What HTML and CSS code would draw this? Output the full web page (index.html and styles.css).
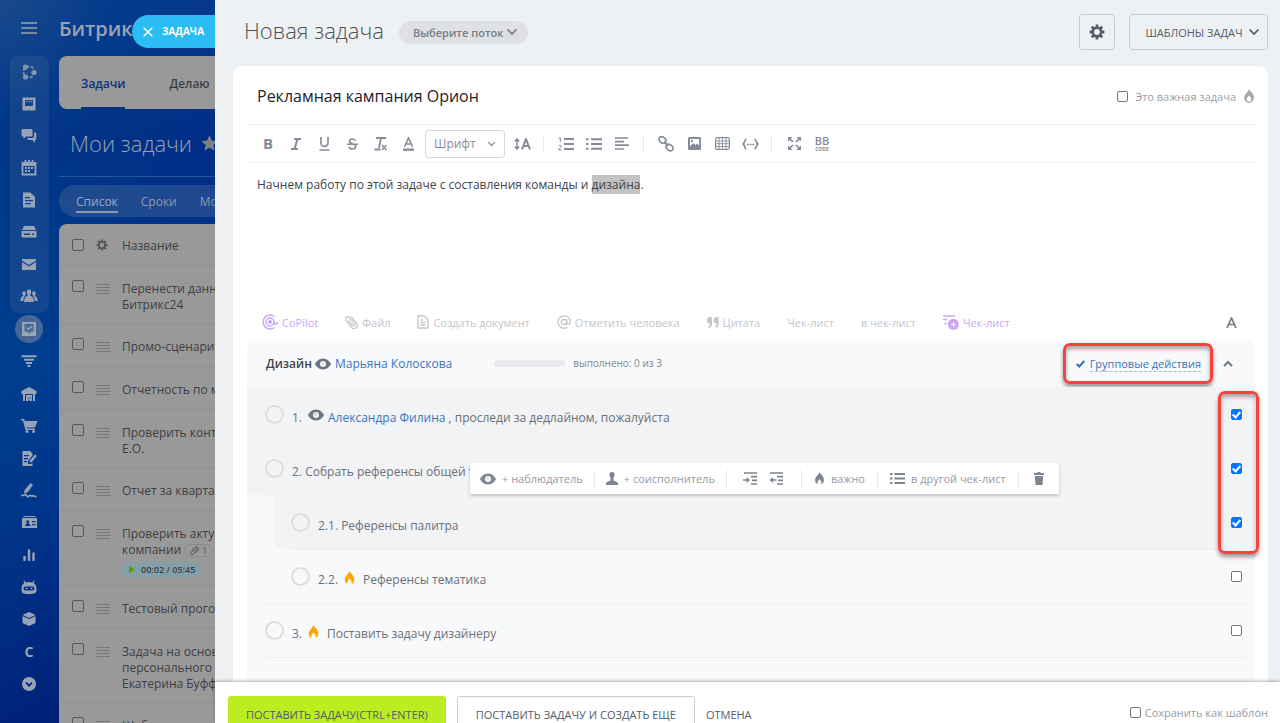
FILE: index.html
```html
<!DOCTYPE html>
<html lang="ru">
<head>
<meta charset="utf-8">
<title>Новая задача</title>
<link rel="stylesheet" href="styles.css">
</head>
<body>
<svg class="defs" aria-hidden="true">
  <symbol id="eye" viewBox="0 0 16 12"><path fill-rule="evenodd" d="M8 .5C4 .5 1.200 3.500 0 6c1.200 2.500 4 5.500 8 5.500s6.800-3 8-5.500C14.800 3.500 12 .5 8 .5zm0 2.500a3 3 0 1 1 0 6 3 3 0 0 1 0-6z" fill="currentColor"/><circle cx="7.500" cy="5.500" r="1.200" fill="currentColor" opacity=".3"/></symbol>
  <symbol id="flame" viewBox="0 0 12 14"><path d="M6 0c.3 2 4.800 4 4.800 8.600 0 2.200-1.200 4-3 4.900.9-1.500.8-3.500-1.800-6-2.600 2.500-2.700 4.500-1.800 6-1.800-.9-3-2.700-3-4.900C1.200 5.500 4.800 3.500 6 0z" fill="currentColor"/></symbol>
  <symbol id="chev" viewBox="0 0 12 8"><path d="M1.500 1.500 6 6l4.500-4.500" fill="none" stroke="currentColor" stroke-width="1.700"/></symbol>
  <symbol id="gear" viewBox="0 0 16 16"><circle cx="8" cy="8" r="4.200" fill="none" stroke="currentColor" stroke-width="2.600"/><path d="M8 .6v3M8 12.400v3M.6 8h3M12.400 8h3M2.800 2.800l2 2M11.200 11.200l2 2M13.200 2.800l-2 2M4.800 11.200l-2 2" stroke="currentColor" stroke-width="2.800"/></symbol>
  <symbol id="drag" viewBox="0 0 14 10"><path d="M0 .5h14M0 3.500h14M0 6.500h14M0 9.500h14" stroke="currentColor"/></symbol>
</svg>
<div class="shell">
  <div class="portal">
    <nav class="rail" aria-label="Главное меню">
      <button class="rail-item burger" aria-label="Меню"><svg width="16" height="14" viewBox="0 0 16 14"><path d="M0 2h16M0 7h16M0 12h16" stroke="currentColor" stroke-width="1.500"/></svg></button>
      <div class="rail-group">
        <a class="rail-item company" href="#" aria-label="Компания"><svg width="16" height="16" viewBox="0 0 16 16"><circle cx="8" cy="8" r="5.500" fill="none" stroke="currentColor" stroke-width="1.800" stroke-dasharray="3 1.500"/><circle cx="4.500" cy="3" r="2.600" fill="currentColor"/><circle cx="13" cy="8.500" r="2.600" fill="currentColor"/><circle cx="4.500" cy="13" r="2.600" fill="currentColor"/></svg></a>
        <a class="rail-item" href="#" aria-label="Лента"><svg width="16" height="16" viewBox="0 0 16 16"><path fill-rule="evenodd" d="M1.500 1.500h13v13h-13zM4 4v6h8V4z" fill="currentColor"/><path d="M5 5.500h1.500M7.500 5.500h1M9.500 5.500H11" stroke="currentColor"/></svg></a>
        <a class="rail-item" href="#" aria-label="Чат"><svg width="16" height="16" viewBox="0 0 16 16"><path d="M2 1h8a1.500 1.500 0 0 1 1.500 1.500V7A1.500 1.500 0 0 1 10 8.500H5L2.500 11V8.500H2A1.500 1.500 0 0 1 .5 7V2.500A1.500 1.500 0 0 1 2 1zM13 4.500h1a1.300 1.300 0 0 1 1.300 1.300v5A1.300 1.300 0 0 1 14 12.100V15l-2.500-2.900H8A1.500 1.500 0 0 1 6.500 10.600V10H11a2 2 0 0 0 2-2z" fill="currentColor"/></svg></a>
        <a class="rail-item" href="#" aria-label="Календарь"><svg width="16" height="16" viewBox="0 0 16 16"><path d="M1.500 3h13v11.500h-13zM1.500 5h13M4.500 0v4M8 0v4M11.500 0v4" fill="none" stroke="currentColor" stroke-width="1.800"/><path d="M4 8h2m1 0h2m1 0h2M4 11h2m1 0h2" stroke="currentColor" stroke-width="2"/></svg></a>
        <a class="rail-item" href="#" aria-label="Документы"><svg width="16" height="16" viewBox="0 0 16 16"><path fill-rule="evenodd" d="M2 .5h7.500L14 5v10.500H2zM4 5v1.300h5V5zM4 8v1.300h8V8zM4 11v1.300h6V11z" fill="currentColor"/></svg></a>
        <a class="rail-item" href="#" aria-label="Диск"><svg width="16" height="12" viewBox="0 0 16 12"><path fill-rule="evenodd" d="M3 0h10l2 4H1zM.5 5h15v6.500H.5zM3 7.500v1.500h6V7.500zM11 7.500v1.500h2V7.500z" fill="currentColor"/></svg></a>
        <a class="rail-item" href="#" aria-label="Почта"><svg width="14" height="11" viewBox="0 0 14 11"><path d="M0 0h14v1.500L7 6 0 1.500zM0 3l7 4.500L14 3v8H0z" fill="currentColor"/></svg></a>
        <a class="rail-item" href="#" aria-label="Группы"><svg width="18" height="14" viewBox="0 0 18 14"><path d="M9 .5c1.500 0 2.300 1 2.200 2.500 0 1.400-.5 2.300-1 2.800v1c2 .7 3.300 1.500 3.300 3.500L14 13H4l.5-2.700c0-2 1.300-2.800 3.300-3.500v-1c-.5-.5-1-1.400-1-2.800C6.700 1.500 7.500.5 9 .5zM4 2.200c1 0 1.800.7 1.800 2 0 1-.4 1.600-.8 2v.6L3.700 9l-.4 3H.5c0-3 .3-4 2.600-5V6.200c-.4-.4-.8-1-.8-2 0-1.300.7-2 1.700-2zM14 2.200c-1 0-1.800.7-1.800 2 0 1 .4 1.600.8 2v.6L14.300 9l.4 3h2.800c0-3-.3-4-2.600-5v-.8c.4-.4.8-1 .8-2 0-1.300-.7-2-1.700-2z" fill="currentColor"/></svg></a>
      </div>
      <div class="rail-list">
        <a class="rail-item active" href="#" aria-label="Задачи"><svg width="14" height="14" viewBox="0 0 14 14"><path fill-rule="evenodd" d="M0 0h14v14H0zM2.500 2v7.500H5L7 11.500l2-2h2.500V2z" fill="currentColor"/><path d="m4.500 5.500 2 2L10 4" fill="none" stroke="currentColor" stroke-width="1.500"/></svg></a>
        <a class="rail-item" href="#" aria-label="Воронка"><svg width="16" height="12" viewBox="0 0 16 12"><path d="M.5 1.200h15M3 4.800h10M5 8h6M6.500 11h3" stroke="currentColor" stroke-width="2"/></svg></a>
        <a class="rail-item" href="#" aria-label="Склад"><svg width="16" height="14" viewBox="0 0 16 14"><path fill-rule="evenodd" d="M8 0l7.500 4v3H14v7h-2V7H4v7H2V7H.5V4zM5 8h6v6H5zM6.500 10.500h1v1h-1zM8.500 10.500h1v1h-1zM7.500 12.500h1V14h-1z" fill="currentColor"/></svg></a>
        <a class="rail-item" href="#" aria-label="Магазин"><svg width="17" height="14" viewBox="0 0 17 14"><path d="M0 0h3l1 2h12.500L14 8.500H5.500l.3 1H14V11H4.500L2 1.500H0z" fill="currentColor"/><circle cx="6" cy="12.500" r="1.500" fill="currentColor"/><circle cx="12.500" cy="12.500" r="1.500" fill="currentColor"/></svg></a>
        <a class="rail-item" href="#" aria-label="Подпись"><svg width="16" height="15" viewBox="0 0 16 15"><path fill-rule="evenodd" d="M1.500 0H9l2.500 2.500v2L7 10v3h3l1.500-1.300V15h-10zM3 4v1.200h5V4zM3 7v1.200h4V7zM3 10v1.200h3V10z" fill="currentColor"/><path d="m8.500 11.500.5-2.300L14 3.500l1.700 1.500L11 11z" fill="currentColor"/></svg></a>
        <a class="rail-item" href="#" aria-label="Роспись"><svg width="16" height="15" viewBox="0 0 16 15"><path d="M9.500 0 12 2 6.500 9.500 3 10.500l.5-3.300zM.5 12.500h2" fill="currentColor"/><path d="M0 12.500c3 0 3.500-1.500 5-.5s1.500 2.500 3 1 1.500-.5 2.500 0 1.500-1 2.500 0 1.500.5 2.500.5" fill="none" stroke="currentColor" stroke-width="1.700"/></svg></a>
        <a class="rail-item" href="#" aria-label="Контакты"><svg width="15" height="13" viewBox="0 0 15 13"><path fill-rule="evenodd" d="M1.500 0h12v1h-12zM0 2h15v10H0zM3 10h5.500c0-1.500-1-2-1.800-2.300V7c.7-.8.700-2.800-1-2.800s-1.700 2-1 2.800v.7C4 8 3 8.500 3 10zM10 5v1.200h3.500V5zM10 8v1.200h3.500V8z" fill="currentColor"/></svg></a>
        <a class="rail-item" href="#" aria-label="Аналитика"><svg width="12" height="12" viewBox="0 0 12 12"><path d="M1.500 8v3M6 1.500V11M10.500 4.500V11" stroke="currentColor" stroke-width="2.400" stroke-linecap="round"/></svg></a>
        <a class="rail-item" href="#" aria-label="Роботы"><svg width="16" height="14" viewBox="0 0 16 14"><path fill-rule="evenodd" d="M3 0l1.500 2.500C6.500 1.800 9.500 1.800 11.500 2.500L13 0l.5.5-.7 2.800C14.500 4.500 15.500 6.500 15.500 9c0 4-1 5-7.500 5S.5 13 .5 9c0-2.500 1-4.500 2.700-5.700L2.500.5zM4.500 6.500a2 2 0 0 0 0 4h7a2 2 0 0 0 0-4z" fill="currentColor"/><circle cx="5.500" cy="8.500" r="1" fill="currentColor"/><circle cx="10.500" cy="8.500" r="1" fill="currentColor"/></svg></a>
        <a class="rail-item" href="#" aria-label="Маркет"><svg width="14" height="14" viewBox="0 0 14 14"><path d="m7 0 6.500 3L7 6 .5 3zM.5 4 7 7l6.500-3V11L7 14 .5 11z" fill="currentColor"/></svg></a>
        <a class="rail-item letter" href="#">C</a>
        <a class="rail-item" href="#" aria-label="Ещё"><svg width="14" height="14" viewBox="0 0 14 14"><circle cx="7" cy="7" r="7" fill="currentColor"/><path d="m4 5.700 3 3 3-3" fill="none" stroke="#00207f" stroke-width="1.700"/></svg></a>
      </div>
    </nav>
    <div class="portal-main">
      <div class="brand">Битрикс24</div>
      <div class="tabs"><a class="tab current" href="#">Задачи</a><a class="tab" href="#">Делаю</a></div>
      <div class="heading"><h2>Мои задачи</h2><svg width="17" height="16" viewBox="0 0 20 18"><path d="m10 0 2.800 6.200 6.800.7-5.100 4.500 1.500 6.600-6-3.500L4 18l1.500-6.600L.4 6.900l6.800-.7z" fill="currentColor"/></svg></div>
      <div class="views"><a class="view current" href="#">Список</a><a class="view" href="#">Сроки</a><a class="view" href="#">Мой план</a></div>
      <table class="tasks">
        <tr class="head"><th><input type="checkbox" aria-label="Выбрать все"></th><th><svg class="gear" width="12" height="12"><use href="#gear"/></svg></th><th>Название</th></tr>
        <tr><td><input type="checkbox" aria-label="Выбрать"></td><td><svg width="14" height="10"><use href="#drag"/></svg></td><td>Перенести данные<br>Битрикс24</td></tr>
        <tr><td><input type="checkbox" aria-label="Выбрать"></td><td><svg width="14" height="10"><use href="#drag"/></svg></td><td>Промо-сценарий</td></tr>
        <tr><td><input type="checkbox" aria-label="Выбрать"></td><td><svg width="14" height="10"><use href="#drag"/></svg></td><td>Отчетность по месяцу</td></tr>
        <tr><td><input type="checkbox" aria-label="Выбрать"></td><td><svg width="14" height="10"><use href="#drag"/></svg></td><td>Проверить контракт<br>Е.О.</td></tr>
        <tr><td><input type="checkbox" aria-label="Выбрать"></td><td><svg width="14" height="10"><use href="#drag"/></svg></td><td>Отчет за кварта...</td></tr>
        <tr class="timed"><td><input type="checkbox" aria-label="Выбрать"></td><td><svg width="14" height="10"><use href="#drag"/></svg></td><td>Проверить актуальность<br>компании <span class="clip"><svg width="9" height="9" viewBox="0 0 9 9"><path d="m2.500 6 3-3.200a1 1 0 0 1 1.500 1.400L3.500 8A1.700 1.700 0 0 1 1 5.700L5 1.500A2 2 0 0 1 8 4.200L5.500 7" fill="none" stroke="currentColor"/></svg>1</span><span class="timer"><svg width="6" height="7" viewBox="0 0 6 7"><path d="M0 0l6 3.500L0 7z" fill="#4f9a05"/></svg>00:02 / 05:45</span></td></tr>
        <tr><td><input type="checkbox" aria-label="Выбрать"></td><td><svg width="14" height="10"><use href="#drag"/></svg></td><td>Тестовый прогон</td></tr>
        <tr><td><input type="checkbox" aria-label="Выбрать"></td><td><svg width="14" height="10"><use href="#drag"/></svg></td><td>Задача на основе<br>персонального<br>Екатерина Буффало</td></tr>
        <tr><td><input type="checkbox" aria-label="Выбрать"></td><td><svg width="14" height="10"><use href="#drag"/></svg></td><td>Шаблон задачи</td></tr>
      </table>
    </div>
    <button class="slider-tab"><svg width="10" height="10" viewBox="0 0 10 10"><path d="m.7.700 8.600 8.600M9.300.700.700 9.300" stroke="currentColor" stroke-width="1.500"/></svg>ЗАДАЧА</button>
  </div>

  <main class="slider">
    <header class="top">
      <h1>Новая задача</h1>
      <button class="flow">Выберите поток<svg width="12" height="8"><use href="#chev"/></svg></button>
      <button class="ghost square" aria-label="Настройки"><svg width="16" height="16"><use href="#gear"/></svg></button>
      <button class="ghost templates">ШАБЛОНЫ ЗАДАЧ<svg width="12" height="8"><use href="#chev"/></svg></button>
    </header>

    <section class="card">
      <div class="title-row">
        <input class="title" type="text" value="Рекламная кампания Орион" aria-label="Название задачи">
        <label class="important"><input type="checkbox"><span>Это важная задача</span><svg width="12" height="14" viewBox="0 0 12 14"><path d="M6 0c.3 2 5 4 5 8.600A5 5 0 0 1 6 13.700a5 5 0 0 1-5-5.100C1 5.500 4.800 3.500 6 0z" fill="#a5abb3"/><path d="M6 6.200c.3 1 2.300 2 2.300 4A2.200 2.200 0 0 1 6 12.400a2.200 2.200 0 0 1-2.300-2.200c0-2 2-3 2.300-4z" fill="#fff"/></svg></label>
      </div>

      <div class="format">
        <button aria-label="Полужирный"><b>B</b></button>
        <button aria-label="Курсив"><svg width="10" height="12" viewBox="0 0 10 12"><path d="M3 1h7M0 11h7M6.500 1l-3 10" stroke="currentColor" stroke-width="2"/></svg></button>
        <button aria-label="Подчёркнутый"><svg width="11" height="14" viewBox="0 0 11 14"><path d="M2 0v6a3.500 3.500 0 0 0 7 0V0M.500 13h10" fill="none" stroke="currentColor" stroke-width="1.700"/></svg></button>
        <button aria-label="Зачёркнутый"><svg width="11" height="12" viewBox="0 0 11 12"><path d="M8.500 3C8 1.500 7 1 5.500 1 3.500 1 2.500 2 2.500 3.300c0 3 6.200 2 6.200 5 0 1.700-1.300 2.700-3.200 2.700S2.500 10.200 2 8.700M0 6.300h11" fill="none" stroke="currentColor" stroke-width="1.600"/></svg></button>
        <button aria-label="Очистить формат"><svg width="13" height="14" viewBox="0 0 13 14"><path d="M2 1h10M7 1 5 11M.500 12.500h6" stroke="currentColor" stroke-width="1.800"/><path d="m8 8 4.500 5M12.500 8 8 13" stroke="currentColor" stroke-width="1.400"/></svg></button>
        <button aria-label="Цвет текста"><svg width="11" height="14" viewBox="0 0 11 14"><path d="M1.500 10 5.500.8l4 9.200M3 7h5" fill="none" stroke="currentColor" stroke-width="1.500"/><path d="M0 12.700h11" stroke="currentColor" stroke-width="2.200"/></svg></button>
        <label class="font-box"><select aria-label="Шрифт"><option>Шрифт</option></select><svg width="9" height="6"><use href="#chev"/></svg></label>
        <button aria-label="Размер шрифта"><svg width="17" height="12" viewBox="0 0 17 12"><path d="M3 1.500v9M.700 3.500 3 1l2.300 2.500M.700 8.500 3 11l2.300-2.500" fill="none" stroke="currentColor" stroke-width="1.500"/><path d="m8 11.500 4-10.500 4 10.500M9.500 8h5" fill="none" stroke="currentColor" stroke-width="2"/></svg></button>
        <i class="sep"></i>
        <button aria-label="Нумерованный список"><svg width="16" height="14" viewBox="0 0 16 14"><path d="M6 2h10M6 7h10M6 12h10" stroke="currentColor" stroke-width="1.800"/><path d="M.800 1.500 2.300.700V5M.500 9c.5-1 2.700-1 2.700.3C3.200 10.500.700 11.500.600 13h3" fill="none" stroke="currentColor"/></svg></button>
        <button aria-label="Маркированный список"><svg width="16" height="12" viewBox="0 0 16 12"><path d="M0 1.200h2.500M0 6h2.500M0 10.800h2.500M5 1.200h11M5 6h11M5 10.800h11" stroke="currentColor" stroke-width="2"/></svg></button>
        <button aria-label="Выравнивание"><svg width="14" height="13" viewBox="0 0 14 13"><path d="M0 1h13M0 4.600h9M0 8.200h14M0 12h9" stroke="currentColor" stroke-width="1.700"/></svg></button>
        <i class="sep"></i>
        <button aria-label="Ссылка"><svg width="16" height="16" viewBox="0 0 16 16"><g fill="none" stroke="currentColor" stroke-width="1.600"><ellipse cx="4.500" cy="4" rx="3.800" ry="2.800" transform="rotate(40 4.500 4)"/><ellipse cx="11.500" cy="11.500" rx="3.800" ry="2.800" transform="rotate(40 11.500 11.500)"/><path d="m6 5.500 4 4.500"/></g></svg></button>
        <button aria-label="Изображение"><svg width="13" height="13" viewBox="0 0 13 13"><path fill-rule="evenodd" d="M1.500 0h10A1.500 1.500 0 0 1 13 1.500v10a1.500 1.500 0 0 1-1.500 1.500h-10A1.500 1.500 0 0 1 0 11.500v-10A1.500 1.500 0 0 1 1.500 0zM2 9.500l3-3.500 2.500 2L9 6.500l2.200 2V2H2zM3 3h2v2H3z" fill="currentColor"/></svg></button>
        <button aria-label="Таблица"><svg width="15" height="13" viewBox="0 0 15 13"><rect x=".600" y=".600" width="13.800" height="11.800" rx="1.500" fill="none" stroke="currentColor" stroke-width="1.200"/><path d="M4 0v13M7.500 0v13M11 0v13M0 4h15M0 6.700h15M0 9.500h15" stroke="currentColor" stroke-width=".9"/></svg></button>
        <button aria-label="Код"><svg width="17" height="12" viewBox="0 0 17 12"><path d="M4.500 1C2 1.500 3.500 4.500 1 6c2.500 1.500 1 4.500 3.500 5M12.500 1C15 1.500 13.500 4.500 16 6c-2.500 1.500-1 4.500-3.500 5" fill="none" stroke="currentColor" stroke-width="1.600"/><path d="M5 6.500h1.800M7.700 6.500h1.800M10.400 6.500h1.800" stroke="currentColor" stroke-width="1.600"/></svg></button>
        <i class="sep"></i>
        <button aria-label="Развернуть"><svg width="13" height="13" viewBox="0 0 13 13"><path d="M0 0h4.500L0 4.500zM13 0v4.500L8.500 0zM0 13V8.500L4.500 13zM13 13H8.500L13 8.500z" fill="currentColor"/><path d="m1 1 4 4M12 1 8 5M1 12l4-4M12 12 8 8" stroke="currentColor" stroke-width="1.700"/></svg></button>
        <button class="bb" aria-label="BB код"><b>BB</b><span>CODE</span></button>
      </div>

      <div class="editor">Начнем работу по этой задаче с составления команды и <mark>дизайна</mark>.</div>

      <div class="inserts">
        <button class="violet"><svg width="16" height="16" viewBox="0 0 16 16"><circle cx="8" cy="8" r="4" fill="none" stroke="currentColor" stroke-width="1.500"/><circle cx="8" cy="8" r="2" fill="currentColor"/><path d="M12.500 2.500a7 7 0 1 0 0 11M15 8a7 7 0 0 1-.5 2.500" fill="none" stroke="currentColor" stroke-width="1.500"/><path d="M12 8c0 3 2.500 3 3 0" fill="none" stroke="currentColor" stroke-width="1.300"/></svg>CoPilot</button>
        <button><svg width="13" height="15" viewBox="0 0 13 15"><path d="m3.500 5.500 4 5a1.300 1.300 0 0 0 2-1.600l-5-6.300A2.200 2.200 0 0 0 1 5.500L6.500 12.500a3.300 3.300 0 0 0 5.200-4L6 1.500" fill="none" stroke="currentColor" stroke-width="1.300"/></svg>Файл</button>
        <button><svg width="12" height="14" viewBox="0 0 12 14"><path d="M1 1h6.500L11 4.500V13H1zM3.500 5H6M3.500 7.500h5M3.500 10h5" fill="none" stroke="currentColor" stroke-width="1.300"/></svg>Создать документ</button>
        <button><svg width="14" height="14" viewBox="0 0 14 14"><circle cx="7" cy="7" r="2.700" fill="none" stroke="currentColor" stroke-width="1.300"/><path d="M9.700 4.200v3.500c0 2.700 3.500 2 3.500-1C13 3 10.500.8 7 .8a6.200 6.200 0 1 0 3.500 11.400" fill="none" stroke="currentColor" stroke-width="1.300"/></svg>Отметить человека</button>
        <button><svg width="12" height="11" viewBox="0 0 12 11"><path d="M2.500 0H5v6c0 3-1.200 4.500-3.500 5V9.500C2.500 9 3 8 3 6.500 1 6.500 0 5.500 0 3.200S1 0 2.500 0zM9.200 0h2.500v6c0 3-1.200 4.500-3.500 5V9.500c1-.5 1.500-1.500 1.500-3-2 0-3-1-3-3.300S7.700 0 9.200 0z" fill="currentColor"/></svg>Цитата</button>
        <button>Чек-лист</button>
        <button>в чек-лист</button>
        <button class="violet"><svg width="16" height="15" viewBox="0 0 16 15"><path d="M0 1h12M0 4.500h4M1.500 8.500H4" stroke="currentColor" stroke-width="1.700"/><circle cx="10.300" cy="9.300" r="5.500" fill="currentColor"/><path d="M10.500 6.500l.8 2.200 2.200.8-2.200.8-.8 2.200-.8-2.200-2.200-.8 2.200-.8z" fill="#fff"/></svg>Чек-лист</button>
        <button class="plain-a" aria-label="Форматирование"><svg width="11" height="11" viewBox="0 0 11 11"><path d="m1 11 4.500-10L10 11M2.500 7.500h6" fill="none" stroke="currentColor" stroke-width="1.700"/></svg></button>
      </div>

      <div class="checklist">
        <div class="cl-head">
          <strong>Дизайн</strong><svg class="eye" width="16" height="12"><use href="#eye"/></svg><a href="#">Марьяна Колоскова</a>
          <progress max="3" value="0" aria-label="выполнено"></progress><span class="done">выполнено: 0 из 3</span>
          <div class="group"><svg width="9" height="8" viewBox="0 0 9 8"><path d="m.800 4 2.500 2.500L8.300 1" fill="none" stroke="currentColor" stroke-width="2"/></svg><a href="#">Групповые действия</a><i class="frame frame-group"></i></div>
          <button class="fold" aria-label="Свернуть"><svg width="10" height="7" viewBox="0 0 10 7"><path d="m1 6 4-4 4 4" fill="none" stroke="currentColor" stroke-width="2.200"/></svg></button>
        </div>
        <div class="rows">
          <div class="row picked"><div class="line"><button class="ring" aria-label="Выполнить"></button><label for="c1">1.</label><svg class="eye" width="16" height="12"><use href="#eye"/></svg><span><a href="#">Александра Филина</a> , проследи за дедлайном, пожалуйста</span><input id="c1" type="checkbox" checked></div></div>
          <div class="row picked"><div class="line"><button class="ring" aria-label="Выполнить"></button><label for="c2">2. Собрать референсы общей темы</label><input id="c2" type="checkbox" checked></div>
            <div class="actions">
              <button><svg class="eye" width="16" height="12"><use href="#eye"/></svg>+ наблюдатель</button>
              <button><svg width="12" height="13" viewBox="0 0 12 13"><path d="M6 0c2 0 2.600 1.300 2.500 3-.1 1.500-.7 2.300-1.200 3l.5 3c2 .3 3.700 1 4.200 2v2H0v-2c.5-1 2.200-1.700 4.200-2l.5-3c-.5-.7-1.100-1.500-1.200-3C3.400 1.300 4 0 6 0z" fill="currentColor"/></svg>+ соисполнитель</button>
              <div class="indent"><button aria-label="Вправо"><svg width="14" height="13" viewBox="0 0 14 13"><path d="M1 1h13M8 4.700h6M9 8.300h5M8 12h6M0 8h5" stroke="currentColor" stroke-width="1.700"/><path d="m3.500 5 3.500 3-3.500 3z" fill="currentColor"/></svg></button><button aria-label="Влево"><svg width="14" height="13" viewBox="0 0 14 13"><path d="M1 1h13M8 4.700h6M9 8.300h5M8 12h6M3 8h4.500" stroke="currentColor" stroke-width="1.700"/><path d="M4 5 .500 8 4 11z" fill="currentColor"/></svg></button></div>
              <button><svg width="11" height="13"><use href="#flame"/></svg>важно</button>
              <button><svg width="15" height="11" viewBox="0 0 15 11"><path d="M0 1h2.500M0 5.500h2.500M0 10h2.500M4.500 1H15M4.500 5.500H15M4.500 10H15" stroke="currentColor" stroke-width="1.800"/></svg>в другой чек-лист</button>
              <button class="trash" aria-label="Удалить"><svg width="10" height="13" viewBox="0 0 10 13"><path d="M3.500 0h3v1H10v2H0V1h3.500zM.800 4h8.400l-.7 9h-7z" fill="currentColor"/></svg></button>
            </div>
          </div>
          <div class="row child picked"><div class="line"><button class="ring" aria-label="Выполнить"></button><label for="c3">2.1. Референсы палитра</label><input id="c3" type="checkbox" checked></div></div>
          <div class="row child last"><div class="line"><button class="ring" aria-label="Выполнить"></button><label for="c4">2.2.</label><svg class="fire" width="13" height="14"><use href="#flame"/></svg><span>Референсы тематика</span><input id="c4" type="checkbox"></div></div>
          <div class="row"><div class="line"><button class="ring" aria-label="Выполнить"></button><label for="c5">3.</label><svg class="fire" width="13" height="14"><use href="#flame"/></svg><span>Поставить задачу дизайнеру</span><input id="c5" type="checkbox"></div></div>
          <i class="frame frame-checks"></i>
        </div>
      </div>
    </section>

    <footer class="bottom">
      <button class="submit">ПОСТАВИТЬ ЗАДАЧУ(CTRL+ENTER)</button>
      <button class="again">ПОСТАВИТЬ ЗАДАЧУ И СОЗДАТЬ ЕЩЕ</button>
      <button class="cancel">ОТМЕНА</button>
      <label class="save"><input type="checkbox">Сохранить как шаблон</label>
    </footer>
  </main>
</div>
</body>
</html>
```
FILE: styles.css
```css
*, *::after { box-sizing: border-box; }
body { margin: 0; font: 13px/17px "Open Sans", "Noto Sans", sans-serif; color: #525c69; }
button { font: inherit; color: inherit; background: none; border: 0; padding: 0; display: inline-flex; align-items: center; justify-content: center; white-space: nowrap; cursor: pointer; }
a { color: inherit; text-decoration: none; }
svg { flex: none; display: block; }
h1, h2 { margin: 0; font-weight: 300; }
input[type="checkbox"] { appearance: none; flex: none; width: 11px; height: 11px; margin: 0; border: 1px solid #767676; border-radius: 2px; background: #fff; display: block; }
input[type="checkbox"]:checked { border-color: #0075ff; background: #0075ff; display: grid; place-items: center; }
input[type="checkbox"]:checked::after { content: ""; width: 5px; height: 8px; margin-bottom: 2px; border: solid #fff; border-width: 0 2px 2px 0; transform: rotate(42deg); }
.defs { position: absolute; width: 0; height: 0; }

.shell { display: grid; grid-template-columns: 215px minmax(0, 1fr); height: 100vh; overflow: hidden; }

/* dimmed portal under the slider */
.portal { position: relative; display: flex; min-height: 0; overflow: hidden; background: radial-gradient(circle at 0 0, rgba(60, 90, 140, .4), transparent 110px), linear-gradient(100deg, rgba(0, 70, 140, .5), transparent 90%), linear-gradient(#06368c, #002a85 20%, #003a90 50%, #002f8a 70%, #001572); }
.rail { flex: none; width: 59px; display: flex; flex-direction: column; align-items: center; padding: 0 1px 23px 0; color: #98a3b5; }
.rail-item { width: 32px; height: 32px; flex: none; display: flex; align-items: center; justify-content: center; }
.burger { margin: 12px 0; }
.company { color: #7f95b3; }
.rail-group { width: 39px; padding-bottom: 1px; border-radius: 8px; background: rgba(120, 140, 160, .15); display: flex; flex-direction: column; align-items: center; }
.rail-list { flex: 1; display: flex; flex-direction: column; justify-content: space-between; }
.active { border: 2px solid transparent; border-radius: 50%; background: #456697 padding-box; }
.letter { font-size: 14px; font-weight: 700; }
.portal-main { flex: none; width: 340px; }
.brand { padding-top: 14px; font-size: 20px; line-height: 30px; font-weight: 600; color: #9aa3b3; }
.tabs { margin-top: 12px; height: 53px; border-radius: 8px; background: #999; display: flex; gap: 44px; padding: 0 22px; font-size: 12px; }
.tab { padding-top: 19px; font-weight: 600; color: #3a3e44; }
.tab.current { color: #0b2f83; border-bottom: 2px solid #0b2f83; }
.heading { display: flex; align-items: center; gap: 9px; height: 68px; padding-left: 11px; color: #8b96a8; border-bottom: 1px solid rgba(120, 150, 190, .35); }
.heading h2 { font-size: 22px; line-height: 30px; color: #98a1b2; }
.heading svg { color: #7d8083; }
.views { margin-top: 8px; height: 32px; border-radius: 16px; background: rgba(100, 125, 160, .3); display: flex; gap: 23px; padding: 8px 17px; color: #8d98ab; font-size: 12px; }
.view { height: 20px; }
.view.current { color: #a0a9b8; border-bottom: 2px solid #8d98ab; }
.tasks { width: 100%; margin-top: 7px; border-spacing: 0; background: #999; border-radius: 8px 0 0 0; color: #3c4045; font-size: 12px; line-height: 16px; white-space: nowrap; }
.tasks td, .tasks th { height: 43px; padding: 14px 0 10px; border-bottom: 1px solid #8f9092; text-align: left; font-weight: 400; vertical-align: top; }
.tasks td:first-child { width: 37px; padding-left: 13px; }
.tasks td:nth-child(2) { width: 26px; padding-top: 18px; color: #74777b; }
.tasks td:last-child { padding-top: 15px; }
.tasks .head th { height: 42px; padding: 14px 0 10px; }
.tasks .head th:first-child { padding: 15px 0 0 13px; }
.tasks .head th:nth-child(2) { padding-top: 15px; color: #55585c; }
.tasks input[type="checkbox"] { width: 12px; height: 12px; border-color: #55585c; background: none; }
.clip { display: inline-flex; align-items: center; gap: 3px; height: 13px; padding: 0 5px; border: 1px solid #8a8c8f; border-radius: 7px; font-size: 9px; color: #55585c; vertical-align: middle; }
.timer { display: flex; align-items: center; gap: 6px; width: 78px; height: 15px; margin-top: 4px; padding-left: 7px; border-radius: 8px; background: #83a0a9; font-size: 9px; font-weight: 600; }
.tasks .timed td { height: 75px; padding-bottom: 4px; }
.slider-tab { position: absolute; right: 0; top: 15px; width: 83px; height: 33px; gap: 9px; border-radius: 17px 0 0 17px; background: #2abcf2; color: #fff; font-size: 10px; font-weight: 700; }

/* slider */
.slider { display: flex; flex-direction: column; min-height: 0; background: #edf1f4; }
.top { flex: none; display: flex; align-items: center; height: 66px; padding: 0 12px 2px 29px; }
.top h1 { font-size: 22px; line-height: 30px; padding-bottom: 4px; color: #4c5057; }
.flow { height: 23px; margin-left: 15px; padding: 0 10px 0 14px; gap: 2px; border-radius: 12px; background: #dfe0e3; color: #777d87; font-size: 11px; font-weight: 600; }
.ghost { height: 36px; border: 1px solid #c8cdd3; border-radius: 3px; color: #525c69; }
.square { width: 36px; margin-left: auto; }
.templates { width: 139px; margin-left: 14px; padding-left: 8px; gap: 5px; font-size: 11px; font-weight: 500; }

.card { flex: 1; min-height: 0; display: flex; flex-direction: column; margin: 0 12px 0 18px; padding: 0 13px 0 14px; border-radius: 9px 9px 0 0; background: #fff; overflow: hidden; }
.title-row { flex: none; display: flex; align-items: center; height: 59px; padding: 2px 0 0 10px; border-bottom: 1px solid #eef0f2; }
.title { flex: 1; min-width: 0; border: 0; outline: 0; padding: 0; font: 16px/24px "Open Sans", sans-serif; color: #1f2328; }
.important { display: flex; align-items: center; gap: 7px; font-size: 11px; color: #9b9fa6; }
.format { flex: none; display: flex; align-items: center; height: 38px; padding-left: 7px; border-bottom: 1px solid #eef0f2; color: #858c98; }
.format button { width: 28px; height: 28px; }
.format b { font-size: 15px; }
.font-box { position: relative; width: 80px; margin: 0 3px; }
.font-box select { appearance: none; width: 100%; height: 28px; padding: 0 8px; border: 1px solid #d5d9de; border-radius: 4px; background: #fff; font: 12px/20px "Open Sans", sans-serif; color: #858c98; }
.font-box svg { position: absolute; right: 9px; top: 11px; }
.sep { width: 1px; height: 18px; margin: 0 8px 0 7px; background: #e6e8eb; }
.format .bb { flex-direction: column; }
.format .bb b { font-size: 11px; line-height: 11px; font-weight: 600; }
.bb span { font-size: 5px; line-height: 7px; font-weight: 700; }
.editor { flex: none; height: 147px; padding: 12px 10px; font-size: 12px; line-height: 19px; color: #3f444b; }
mark { background: #c3c3c3; color: inherit; display: inline-block; }
.inserts { flex: none; display: flex; align-items: center; gap: 27px; height: 30px; padding: 0 18px 6px 15px; font-size: 11px; color: #c3c6cb; }
.inserts button { gap: 4px; }
.inserts .violet { color: #c9a6f7; }
.inserts .plain-a { margin-left: auto; color: #767c87; }

.checklist { flex: 1 0 auto; border-radius: 8px 8px 0 0; background: #f8f9fb; }
.checklist a { color: #3a74bd; }
.eye { color: #6e7683; }
.cl-head { display: flex; align-items: center; height: 47px; padding: 0 22px 0 19px; font-size: 12px; }
.cl-head strong { font-weight: 600; color: #3f444b; margin-right: 3px; }
.cl-head .eye { margin-right: 4px; }
progress { appearance: none; width: 71px; height: 7px; margin: 0 8px 0 42px; border: 0; border-radius: 4px; background: #e9eaed; overflow: hidden; }
progress::-webkit-progress-bar { background: #e9eaed; }
.done { font-size: 10px; color: #80868f; }
.group { position: relative; display: flex; align-items: center; gap: 5px; margin-left: auto; color: #2f6fbf; font-size: 11px; }
.group a { line-height: 15px; border-bottom: 1px dashed #9dbbe0; }
.fold { margin-left: 22px; color: #767c87; }
.frame { position: absolute; pointer-events: none; border: 3px solid #f8423f; border-radius: 7px; box-shadow: 0 3px 4px rgba(0, 0, 0, .4), inset 0 3px 4px rgba(0, 0, 0, .35); }
.frame-group { inset: -13px -12px -12px -13px; }
.frame-checks { right: -4px; top: 4px; width: 41px; height: 163px; }

.rows { position: relative; }
.row { position: relative; height: 54px; padding: 0 9px 0 18px; font-size: 12px; color: #6a7079; }
.row.picked { background: #f2f3f5; }
.line { height: 55px; display: flex; align-items: center; border-bottom: 1px solid #eceef0; white-space: nowrap; }
.line input[type="checkbox"] { margin: 0 4px 0 auto; }
.line label, .line span { padding-top: 6px; }
.ring { flex: none; width: 19px; height: 19px; margin-right: 8px; border: 2px solid #dcdee1; border-radius: 50%; }
.line .eye { margin: 1px 4px 0 6px; }
.fire { margin: 4px 7px 0 5px; color: #ffa500; }
.child { margin-left: 28px; padding-left: 16px; }
.last::before { content: ""; position: absolute; left: -10px; right: 9px; bottom: -1px; height: 1px; background: #eceef0; }
.actions { position: absolute; z-index: 1; left: 223px; top: 22px; height: 31px; display: flex; align-items: center; background: #fff; box-shadow: 0 2px 3px rgba(0, 0, 0, .2); color: #959ba4; font-size: 11px; }
.actions > * { height: 18px; padding: 0 11px 0 10px; gap: 6px; }
.actions > * + * { border-left: 1px solid #e6e8eb; padding: 0 11px; }
.actions svg { color: #7d8590; }
.actions .indent { display: flex; gap: 12px; padding: 0 18px 0 16px; }
.actions .indent ~ button { padding: 0 12px; }
.actions .indent ~ .trash { padding: 0 15px; }

.bottom { flex: none; position: relative; display: flex; align-items: flex-start; height: 41px; padding: 14px 12px 0 13px; background: #fff; box-shadow: 0 -1px 3px rgba(0, 0, 0, .3); font-size: 11px; font-weight: 400; }
.bottom button { height: 36px; }
.submit { padding: 0 18px; border-radius: 3px; background: #bbed21; }
.bottom .again { margin: 0 11px; padding: 0 18px; border: 1px solid #c8cdd3; border-radius: 3px; }
.save { display: flex; align-items: center; gap: 4px; margin-left: auto; padding-top: 8px; color: #959ba4; }
```
